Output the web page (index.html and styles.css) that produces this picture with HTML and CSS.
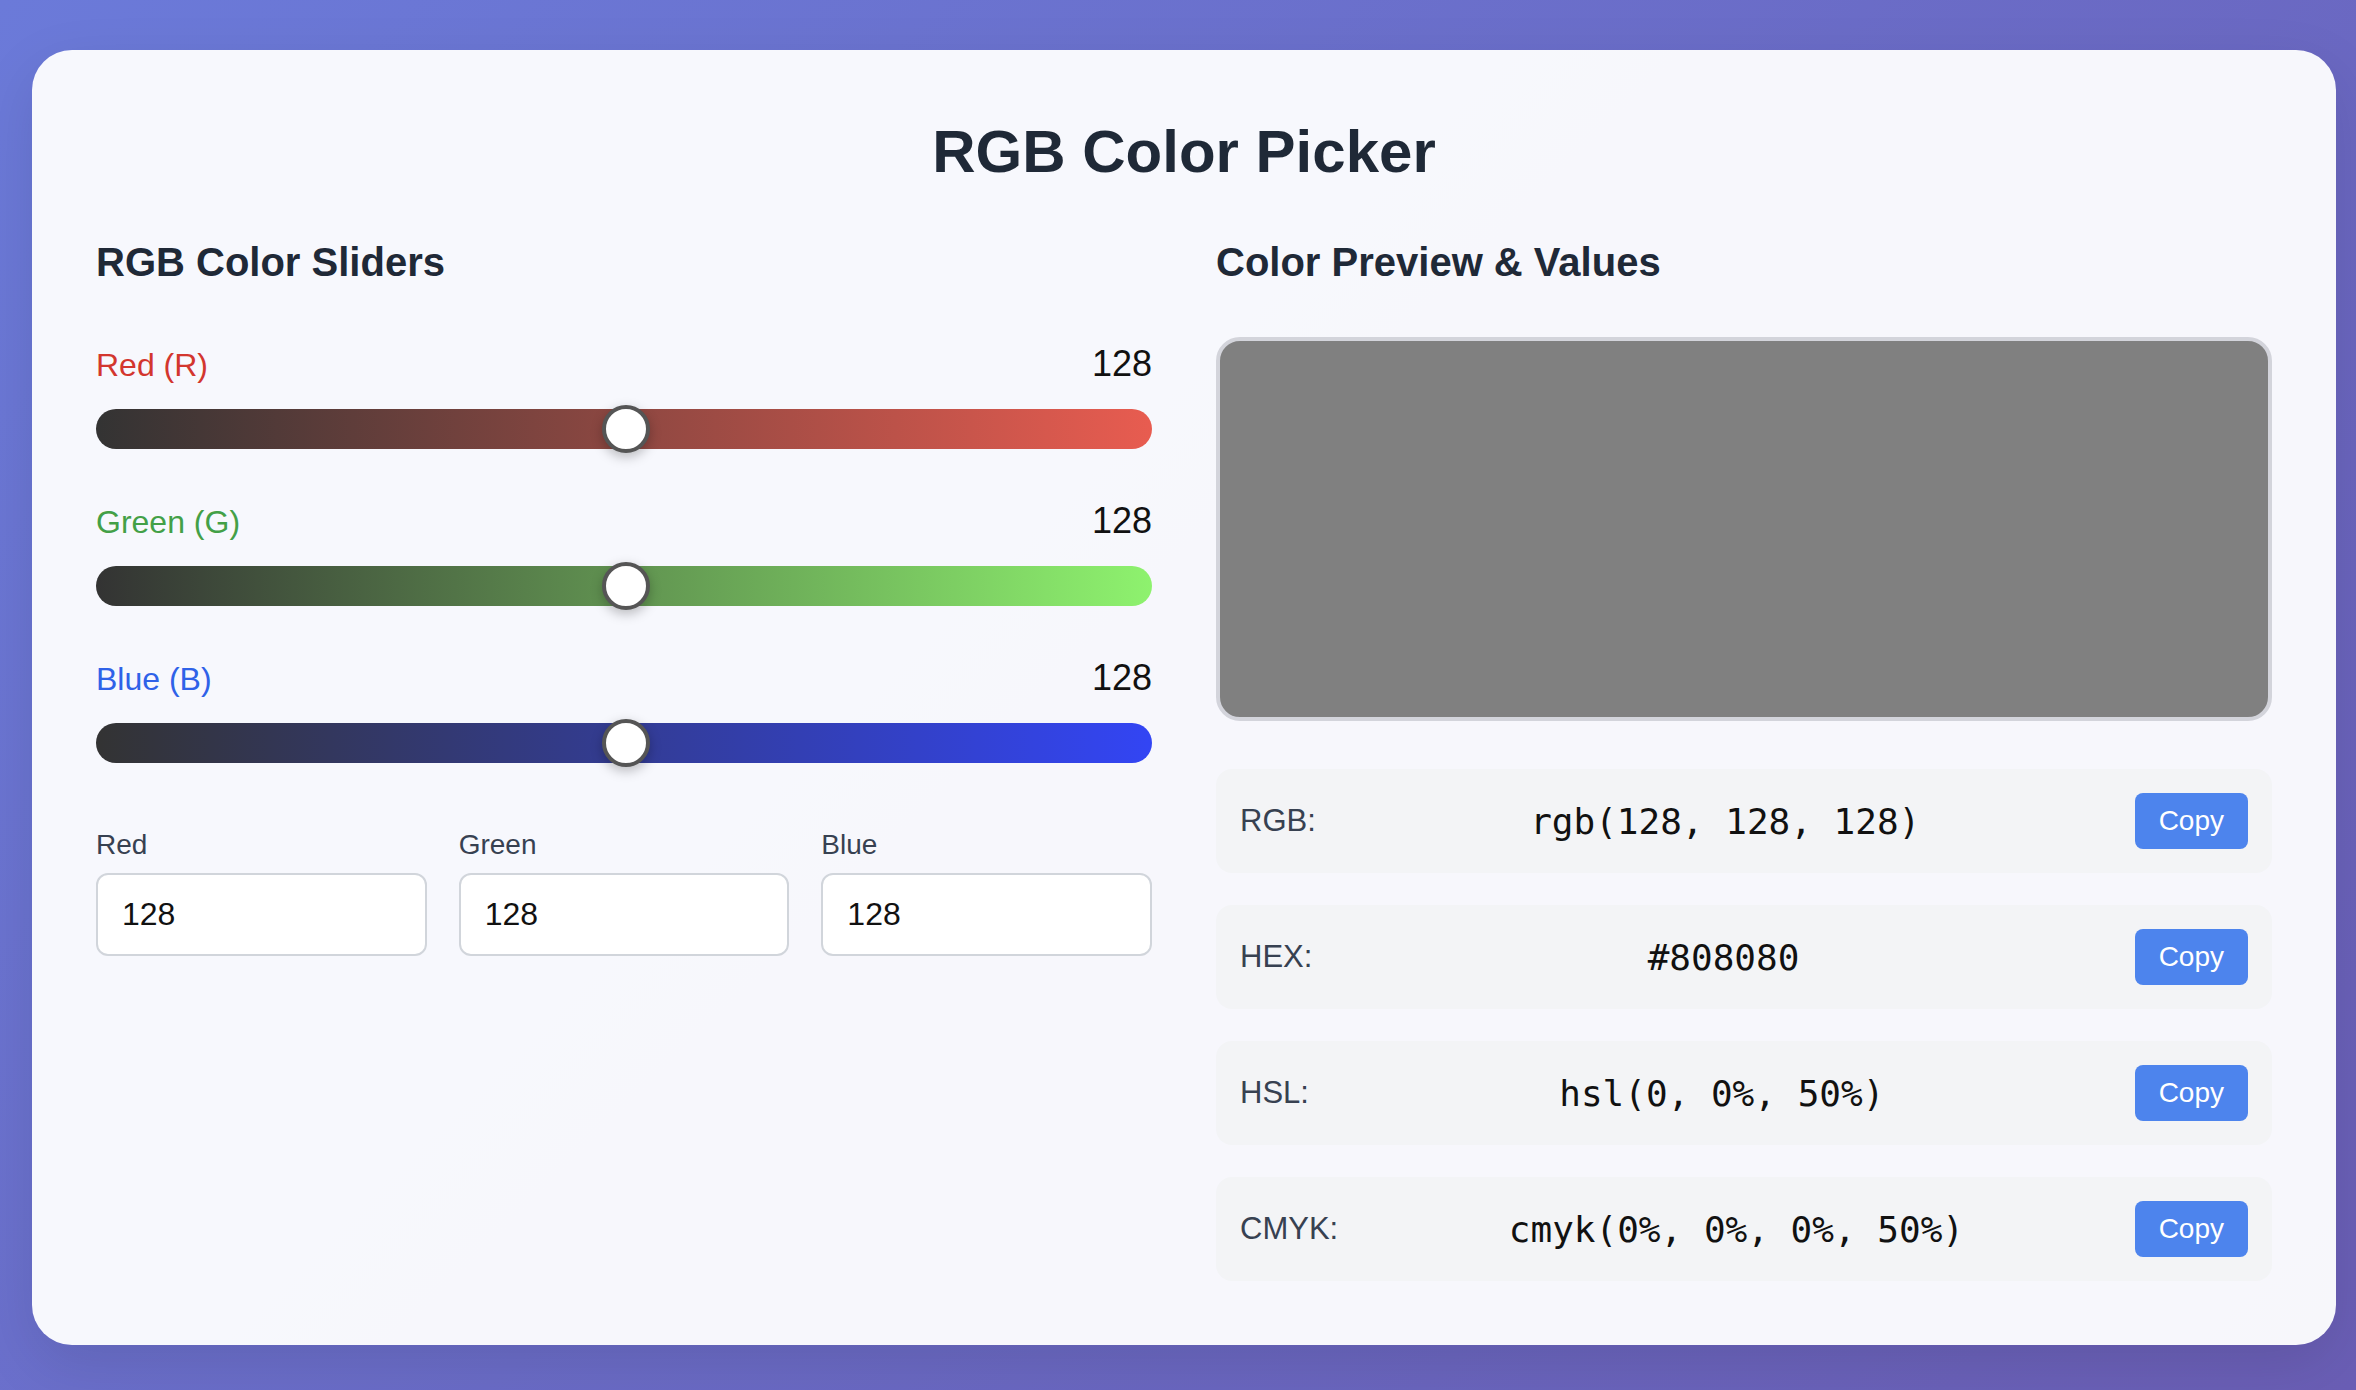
FILE: index.html
```html
<!DOCTYPE html>
<html lang="en">
<head>
    <meta charset="UTF-8">
    <meta name="viewport" content="width=device-width, initial-scale=1.0">
    <title>RGB Color Picker</title>
    <link rel="stylesheet" href="styles.css">
</head>
<body>
    <div class="container">
        <h1>RGB Color Picker</h1>

        <div class="columns">
            <section class="sliders">
                <h2>RGB Color Sliders</h2>

                <div class="slider-group">
                    <div class="slider-head">
                        <label for="redSlider" class="channel red">Red (R)</label>
                        <span class="channel-value" id="redValue">128</span>
                    </div>
                    <input type="range" class="slider red-track" id="redSlider" min="0" max="255" value="128">
                </div>

                <div class="slider-group">
                    <div class="slider-head">
                        <label for="greenSlider" class="channel green">Green (G)</label>
                        <span class="channel-value" id="greenValue">128</span>
                    </div>
                    <input type="range" class="slider green-track" id="greenSlider" min="0" max="255" value="128">
                </div>

                <div class="slider-group">
                    <div class="slider-head">
                        <label for="blueSlider" class="channel blue">Blue (B)</label>
                        <span class="channel-value" id="blueValue">128</span>
                    </div>
                    <input type="range" class="slider blue-track" id="blueSlider" min="0" max="255" value="128">
                </div>

                <div class="inputs">
                    <div class="input-field">
                        <label for="redInput">Red</label>
                        <input type="number" id="redInput" min="0" max="255" value="128">
                    </div>
                    <div class="input-field">
                        <label for="greenInput">Green</label>
                        <input type="number" id="greenInput" min="0" max="255" value="128">
                    </div>
                    <div class="input-field">
                        <label for="blueInput">Blue</label>
                        <input type="number" id="blueInput" min="0" max="255" value="128">
                    </div>
                </div>
            </section>

            <section class="preview-side">
                <h2>Color Preview &amp; Values</h2>

                <div class="preview" id="preview" style="background-color: rgb(128, 128, 128);"></div>

                <div class="values">
                    <div class="value-row">
                        <span class="value-label">RGB:</span>
                        <span class="value-text" id="rgbText">rgb(128, 128, 128)</span>
                        <button class="copy-btn" data-target="rgbText">Copy</button>
                    </div>
                    <div class="value-row">
                        <span class="value-label">HEX:</span>
                        <span class="value-text" id="hexText">#808080</span>
                        <button class="copy-btn" data-target="hexText">Copy</button>
                    </div>
                    <div class="value-row">
                        <span class="value-label">HSL:</span>
                        <span class="value-text" id="hslText">hsl(0, 0%, 50%)</span>
                        <button class="copy-btn" data-target="hslText">Copy</button>
                    </div>
                    <div class="value-row">
                        <span class="value-label">CMYK:</span>
                        <span class="value-text" id="cmykText">cmyk(0%, 0%, 0%, 50%)</span>
                        <button class="copy-btn" data-target="cmykText">Copy</button>
                    </div>
                </div>
            </section>
        </div>
    </div>

    <script>
        const channels = ['red', 'green', 'blue'];

        function toHex(n) {
            return n.toString(16).padStart(2, '0');
        }

        // recompute every format and refresh the preview
        function update() {
            const [r, g, b] = channels.map(c => parseInt(document.getElementById(c + 'Slider').value));

            channels.forEach((c, i) => {
                const v = [r, g, b][i];
                document.getElementById(c + 'Value').textContent = v;
                document.getElementById(c + 'Input').value = v;
            });

            document.getElementById('preview').style.backgroundColor = `rgb(${r}, ${g}, ${b})`;
            document.getElementById('rgbText').textContent = `rgb(${r}, ${g}, ${b})`;
            document.getElementById('hexText').textContent = `#${toHex(r)}${toHex(g)}${toHex(b)}`.toUpperCase();

            const rn = r / 255, gn = g / 255, bn = b / 255;
            const max = Math.max(rn, gn, bn), min = Math.min(rn, gn, bn);
            let h = 0, s = 0;
            const l = (max + min) / 2;
            if (max !== min) {
                const d = max - min;
                s = l > 0.5 ? d / (2 - max - min) : d / (max + min);
                if (max === rn) h = (gn - bn) / d + (gn < bn ? 6 : 0);
                else if (max === gn) h = (bn - rn) / d + 2;
                else h = (rn - gn) / d + 4;
                h *= 60;
            }
            document.getElementById('hslText').textContent =
                `hsl(${Math.round(h)}, ${Math.round(s * 100)}%, ${Math.round(l * 100)}%)`;

            const k = 1 - max;
            const c = k === 1 ? 0 : (1 - rn - k) / (1 - k);
            const m = k === 1 ? 0 : (1 - gn - k) / (1 - k);
            const y = k === 1 ? 0 : (1 - bn - k) / (1 - k);
            document.getElementById('cmykText').textContent =
                `cmyk(${Math.round(c * 100)}%, ${Math.round(m * 100)}%, ${Math.round(y * 100)}%, ${Math.round(k * 100)}%)`;
        }

        channels.forEach(c => {
            document.getElementById(c + 'Slider').addEventListener('input', update);
            document.getElementById(c + 'Input').addEventListener('input', function () {
                const v = Math.min(255, Math.max(0, parseInt(this.value) || 0));
                document.getElementById(c + 'Slider').value = v;
                update();
            });
        });

        document.querySelectorAll('.copy-btn').forEach(btn => {
            btn.addEventListener('click', function () {
                const text = document.getElementById(this.dataset.target).textContent;
                if (navigator.clipboard) navigator.clipboard.writeText(text);
            });
        });
    </script>
</body>
</html>
```

FILE: styles.css
```css
body {
    font-family: "Liberation Sans", Arial, sans-serif;
    background: linear-gradient(135deg, #6b7ad9 0%, #6a5eb5 100%);
    margin: 0;
    padding: 50px 20px 44px 32px;
    min-height: 100vh;
    box-sizing: border-box;
}

.container {
    background: rgba(255, 255, 255, 0.95);
    border-radius: 40px;
    padding: 64px;
    box-shadow: 0 20px 60px rgba(0, 0, 0, 0.1);
}

h1 {
    text-align: center;
    font-size: 60px;
    line-height: 1.25;
    color: #1f2937;
    margin: 0 0 51px;
}

h2 {
    font-size: 40px;
    color: #1f2937;
    margin: 0 0 52px;
}

.columns {
    display: grid;
    grid-template-columns: 1fr 1fr;
    gap: 64px;
}

.slider-group {
    margin-bottom: 45px;
}

.slider-head {
    display: flex;
    justify-content: space-between;
    align-items: baseline;
    height: 54px;
    line-height: 1.5;
}

.channel {
    font-size: 32px;
}

.channel.red {
    color: #d3362e;
}

.channel.green {
    color: #43a047;
}

.channel.blue {
    color: #2f62e8;
}

.channel-value {
    font-size: 36px;
    color: #111;
}

.slider {
    -webkit-appearance: none;
    appearance: none;
    display: block;
    width: 100%;
    height: 40px;
    margin: 18px 0 0;
    border-radius: 20px;
    outline: none;
    cursor: pointer;
}

.red-track {
    background: linear-gradient(to right, #333333, #e85c50);
}

.green-track {
    background: linear-gradient(to right, #333333, #8ef26e);
}

.blue-track {
    background: linear-gradient(to right, #333333, #3345f4);
}

.slider::-webkit-slider-thumb {
    -webkit-appearance: none;
    appearance: none;
    width: 48px;
    height: 48px;
    border-radius: 50%;
    background: #fff;
    border: 4px solid #555;
    box-sizing: border-box;
    box-shadow: 0 4px 12px rgba(0, 0, 0, 0.25);
}

.inputs {
    display: grid;
    grid-template-columns: repeat(3, 1fr);
    gap: 32px;
    margin-top: 66px;
}

.input-field label {
    display: block;
    font-size: 28px;
    color: #374151;
    margin-bottom: 12px;
}

.input-field input {
    width: 100%;
    height: 83px;
    box-sizing: border-box;
    padding: 0 24px;
    border: 2px solid #d1d5db;
    border-radius: 12px;
    background: #fff;
    font-family: inherit;
    font-size: 32px;
    color: #111;
    -moz-appearance: textfield;
}

.input-field input::-webkit-outer-spin-button,
.input-field input::-webkit-inner-spin-button {
    -webkit-appearance: none;
    margin: 0;
}

.preview {
    height: 384px;
    box-sizing: border-box;
    border: 4px solid #d3d4db;
    border-radius: 24px;
    margin-bottom: 48px;
}

.values {
    display: flex;
    flex-direction: column;
    gap: 32px;
}

.value-row {
    display: flex;
    align-items: center;
    padding: 24px;
    background-color: #f3f4f6;
    border-radius: 16px;
}

.value-label {
    font-size: 31px;
    color: #374151;
}

.value-text {
    flex: 1;
    text-align: center;
    font-family: "DejaVu Sans Mono", "Liberation Mono", monospace;
    font-size: 36px;
    color: #111;
}

.copy-btn {
    padding: 12px 24px;
    background-color: #4d84ed;
    color: white;
    border: none;
    border-radius: 8px;
    font-family: inherit;
    font-size: 28px;
    cursor: pointer;
}

.copy-btn:hover {
    background-color: #3b73de;
}
```
